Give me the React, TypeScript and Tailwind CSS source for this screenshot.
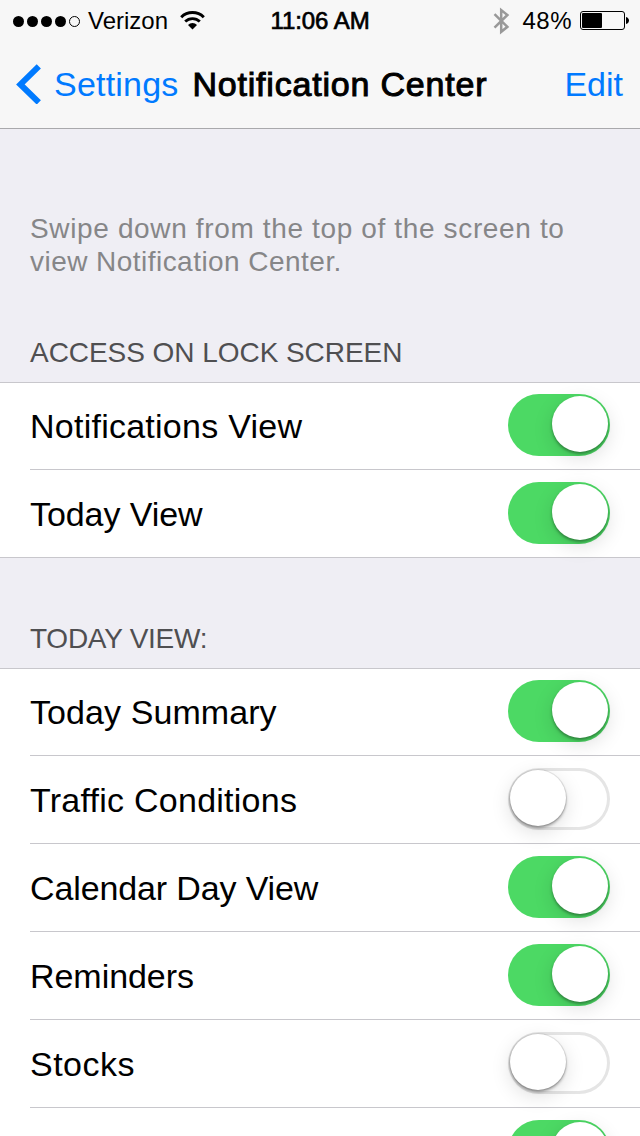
interface SettingRow {
  label: string;
  enabled: boolean;
  tracking: string;
}

interface SwitchProps {
  label: string;
  enabled: boolean;
}

interface SettingGroupProps {
  rows: SettingRow[];
}

export default function App() {
  return (
    <div className="flex flex-col w-[640px] h-[1136px] overflow-hidden bg-[#efeef4] text-black font-['Liberation_Sans',Arial,sans-serif]">
      <header className="shrink-0 h-[129px] bg-[#f7f7f7] border-b border-[#a9a9ac]">
        <StatusBar />
        <NavBar />
      </header>
      <main>
        <p className="h-[149px] pt-[83px] pl-[30px] text-[28px] leading-[33px] tracking-[0.64px] text-[#868688]">
          Swipe down from the top of the screen to
          <br />
          <span className="tracking-[0.46px]">view Notification Center.</span>
        </p>
        <h2 className="h-[104px] pt-[58px] pl-[30px] text-[28px] leading-[33px] tracking-[-0.05px] text-[#4f4f51]">
          ACCESS ON LOCK SCREEN
        </h2>
        <SettingGroup rows={LOCK_SCREEN_ROWS} />
        <h2 className="h-[110px] pt-[64px] pl-[30px] text-[28px] leading-[33px] tracking-[-0.25px] text-[#4f4f51]">
          TODAY VIEW:
        </h2>
        <SettingGroup rows={TODAY_ROWS} />
      </main>
    </div>
  );
}

function StatusBar() {
  return (
    <div className="grid grid-cols-[1fr_auto_1fr] items-center h-[40px] pt-px pl-[13px] pr-[11px] text-[24px] leading-[40px]">
      <div className="flex items-center">
        <div className="flex gap-[3px]">
          {SIGNAL_DOTS.map((filled, index) => (
            <span
              key={index}
              className={
                filled
                  ? 'w-[11px] h-[11px] rounded-full bg-black'
                  : 'w-[11px] h-[11px] rounded-full border border-black'
              }
            />
          ))}
        </div>
        <span className="ml-[8px]">Verizon</span>
        <svg className="ml-[12px] mb-[2px]" width="25" height="19" viewBox="0 0 25 19" fill="none">
          <path d="M1.2 6.2a16.2 16.2 0 0 1 22.6 0" stroke="#000" strokeWidth="3" />
          <path d="M5.2 10.6a10.4 10.4 0 0 1 14.6 0" stroke="#000" strokeWidth="2.8" />
          <path d="M8 13.9a6.5 6.5 0 0 1 9 0L12.5 18.4z" fill="#000" />
        </svg>
      </div>
      <span className="mr-[2px] tracking-[-0.05px] [-webkit-text-stroke:0.7px_#000]">11:06 AM</span>
      <div className="flex items-center justify-end">
        <svg width="17" height="28" viewBox="0 0 17 28" fill="none" stroke="#999" strokeWidth="2.5">
          <path d="M1.5 7.2L14.4 19.8L8.2 24.8V3L14.4 8L1.5 20.6" />
        </svg>
        <span className="ml-[12px] tracking-[0.5px]">48%</span>
        <svg className="ml-[8px] mb-[2px]" width="49" height="19" viewBox="0 0 49 19">
          <rect x="0.5" y="0.5" width="44" height="18" rx="2.5" fill="none" stroke="#000" />
          <rect x="2" y="2" width="20" height="15" rx="1" fill="#000" />
          <path d="M46 6c4 1 4 6 0 7z" fill="#000" />
        </svg>
      </div>
    </div>
  );
}

function NavBar() {
  return (
    <nav className="flex items-center h-[88px] pl-[16px] pr-[17px] text-[34px] leading-[88px] text-[#007aff]">
      <svg width="26" height="40" viewBox="0 0 26 40" fill="none" stroke="#007aff" strokeWidth="6">
        <path d="M22.8 2.4L4.4 20.4L22.8 38.4" />
      </svg>
      <span className="ml-[12px] tracking-[0.2px]">Settings</span>
      <h1 className="ml-[14px] tracking-[0.8px] text-black [-webkit-text-stroke:1px_#000]">
        Notification Center
      </h1>
      <span className="ml-auto">Edit</span>
    </nav>
  );
}

function SettingGroup({ rows }: SettingGroupProps) {
  return (
    <ul className="bg-white shadow-[inset_0_1px_#c8c7cc,inset_0_-1px_#c8c7cc]">
      {rows.map((row, index) => (
        <li key={row.label} className="pl-[30px]">
          <div
            className={
              index < rows.length - 1
                ? 'flex justify-between h-[88px] pt-[12px] pr-[30px] border-b border-[#c8c7cc]'
                : 'flex justify-between h-[88px] pt-[12px] pr-[30px]'
            }
          >
            <span className={`leading-[64px] text-[34px] ${row.tracking}`}>{row.label}</span>
            <Switch label={row.label} enabled={row.enabled} />
          </div>
        </li>
      ))}
    </ul>
  );
}

function Switch({ label, enabled }: SwitchProps) {
  return (
    <button
      type="button"
      role="switch"
      aria-checked={enabled}
      aria-label={label}
      className={
        enabled
          ? 'flex justify-end w-[102px] h-[62px] p-[2px] rounded-full bg-[#4cd964]'
          : 'flex w-[102px] h-[62px] p-[2px] rounded-full bg-white shadow-[inset_0_0_0_3px_#e5e5e5]'
      }
    >
      <span
        className={
          enabled
            ? 'w-[56px] h-[56px] rounded-full bg-white shadow-[0_2px_3px_rgba(0,0,0,0.35),0_6px_20px_rgba(0,0,0,0.13)]'
            : 'w-[56px] h-[56px] rounded-full bg-white shadow-[0_0_0_1px_rgba(0,0,0,0.08),0_2px_3px_rgba(0,0,0,0.35),0_6px_20px_rgba(0,0,0,0.13)]'
        }
      />
    </button>
  );
}

const SIGNAL_DOTS = [true, true, true, true, false];

const LOCK_SCREEN_ROWS: SettingRow[] = [
  { label: 'Notifications View', enabled: true, tracking: 'tracking-[0.25px]' },
  { label: 'Today View', enabled: true, tracking: 'tracking-[-0.08px]' },
];

const TODAY_ROWS: SettingRow[] = [
  { label: 'Today Summary', enabled: true, tracking: 'tracking-[0.08px]' },
  { label: 'Traffic Conditions', enabled: false, tracking: 'tracking-[0.25px]' },
  { label: 'Calendar Day View', enabled: true, tracking: 'tracking-[-0.13px]' },
  { label: 'Reminders', enabled: true, tracking: 'tracking-[-0.05px]' },
  { label: 'Stocks', enabled: false, tracking: 'tracking-[0.5px]' },
  { label: '', enabled: true, tracking: 'tracking-normal' },
];
